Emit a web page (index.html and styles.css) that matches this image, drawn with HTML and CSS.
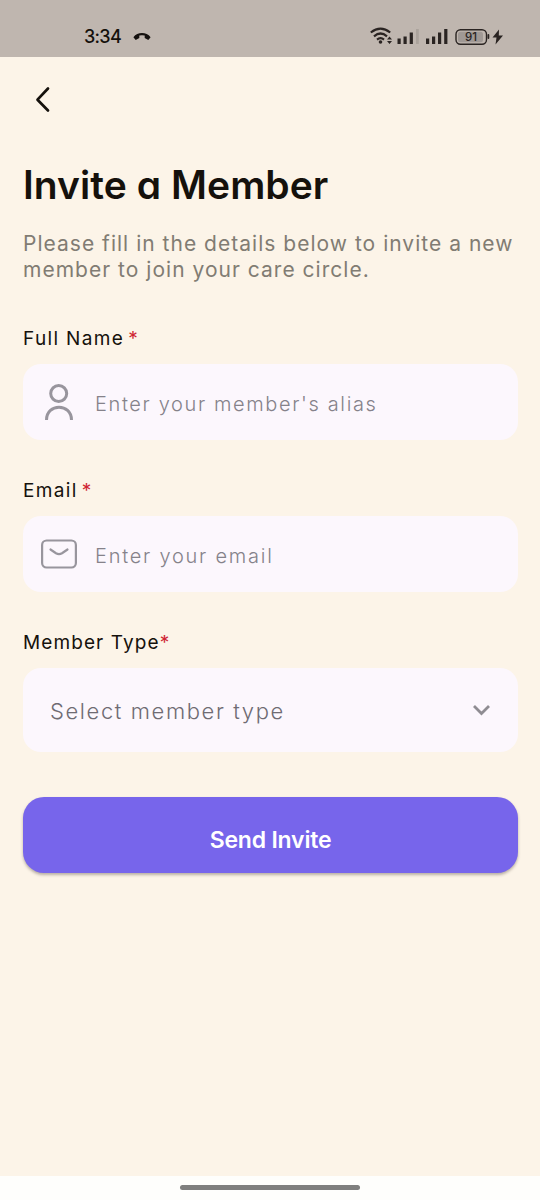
FILE: index.html
```html
<!DOCTYPE html>
<html lang="en">
<head>
<meta charset="utf-8">
<title>Invite a Member</title>
<link rel="stylesheet" href="styles.css">
</head>
<body>
<div class="screen">
  <header class="status">
    <span class="time">3:34</span>
    <svg class="call" width="18" height="10" viewBox="0 0 18 10"><path d="M.4 6.200C4.500.6 13.500.6 17.600 6.200L15.300 9 11.700 7V4.500Q9 3.800 6.300 4.500V7L2.700 9Z" fill="#15110f"/></svg>
    <svg class="signals" width="134" height="20" viewBox="0 0 134 20">
      <g fill="none" stroke="#2a2422" stroke-width="2.200">
        <path d="M.8 6.500Q10.500-1.300 20.200 6.500M4 10.300Q10.500 4.700 17 10.300M7 13.600Q10.500 10.800 14 13.600"/>
      </g>
      <g fill="#2a2422">
        <circle cx="10.500" cy="16" r="1.800"/>
        <path d="M17 13.500 19.500 10.500 22 13.500ZM17 15 22 15 19.500 18Z"/>
        <path d="M27.500 12.500h3.200V18h-3.200zM33.500 10.500h3.200V18h-3.200zM39.700 6.500h3.200V18h-3.200zM56 12.500h3.200V18H56zM62 10.500h3.200V18H62zM68 6.500h3.200V18H68zM74.200 3h3.200v15h-3.200z"/>
        <path d="M46 3h2.800v15H46z" opacity=".13"/>
        <rect x="117.500" y="8" width="1.800" height="5" rx=".9"/>
        <path d="M129 3.500 122.500 11.500h4L125.500 18.500 133 9.500h-4.200Z"/>
      </g>
      <rect x="86" y="3.800" width="30.500" height="14.400" rx="4.500" fill="none" stroke="#2a2422" stroke-width="1.400"/>
      <rect x="88" y="5.800" width="25" height="10.400" rx="2.500" fill="#a09995"/>
      <text class="level" x="101" y="15.200" text-anchor="middle">91</text>
    </svg>
  </header>
  <main class="content">
    <svg class="back" width="16" height="28" viewBox="0 0 16 28"><path d="M13 2.500 2.500 13.700 13 24.500" fill="none" stroke="#15110c" stroke-width="2.700" stroke-linecap="round" stroke-linejoin="round"/></svg>
    <h1 class="title">Invite a Member</h1>
    <p class="intro">Please fill in the details below to invite a new<br>member to join your care circle.</p>
    <form class="form">
      <div class="group">
        <div class="label"><span class="name-label">Full Name</span><span class="star spaced">*</span></div>
        <div class="field">
          <svg class="icon" width="36" height="38" viewBox="0 0 36 38"><g fill="none" stroke="#98959d" stroke-width="3"><circle cx="17.700" cy="10.500" r="8"/><path d="M5.500 37C5.500 20 30.500 20 30.500 37"/></g></svg>
          <span class="hint alias">Enter your member's alias</span>
        </div>
      </div>
      <div class="group">
        <div class="label"><span class="email-label">Email</span><span class="star spaced">*</span></div>
        <div class="field">
          <svg class="icon" width="36" height="30" viewBox="0 0 36 30"><g fill="none" stroke="#98959d" stroke-width="2.200" stroke-linecap="round"><rect x="1.100" y="1.500" width="33.800" height="27" rx="4.500"/><path d="M9.500 10.500 15 14.200Q18 16 21 14.200L26.500 10.500"/></g></svg>
          <span class="hint email">Enter your email</span>
        </div>
      </div>
      <div class="group">
        <div class="label"><span class="type-label">Member Type</span><span class="star">*</span></div>
        <div class="field select">
          <span class="choice">Select member type</span>
          <svg width="20" height="14" viewBox="0 0 20 14"><path d="M2 3 9.500 10.500 17 3" fill="none" stroke="#8f8c92" stroke-width="2.800"/></svg>
        </div>
      </div>
      <button class="send" type="button">Send Invite</button>
    </form>
  </main>
  <footer class="navbar"><div class="handle"></div></footer>
</div>
</body>
</html>
```
FILE: styles.css
```css
* { box-sizing: border-box; }
body { margin: 0; }
.screen {
  width: 540px;
  height: 1200px;
  display: flex;
  flex-direction: column;
  background: #fcf4e8;
  color: #15110c;
  font-family: Inter, sans-serif;
}
.status {
  height: 57px;
  flex: none;
  display: flex;
  align-items: center;
  padding: 15px 36px 0 84px;
  background: #bfb6af;
}
.time {
  width: 38px;
  padding-top: 1px;
  font: 500 18px/24px Inter, sans-serif;
  letter-spacing: -.7px;
  white-space: nowrap;
}
.call { margin-left: 11px; }
.signals { margin-left: auto; }
.level { font: 500 11.500px Inter, sans-serif; fill: #2a2422; }
.content { flex: 1; padding: 29px 22px 0 23px; }
.back { display: block; margin-left: 12px; }
.title {
  margin: 47px 0 0;
  font-size: 39px;
  line-height: 48px;
  font-weight: 600;
  letter-spacing: .05px;
  font-feature-settings: "cv11", "ss03";
  white-space: nowrap;
}
.intro {
  margin: 22px 0 0;
  font-size: 21px;
  line-height: 25.500px;
  letter-spacing: 1.020px;
  color: #817c73;
  white-space: nowrap;
}
.form { margin-top: 45px; }
.group { margin-bottom: 39px; }
.label {
  height: 24px;
  display: flex;
  font-size: 19px;
  line-height: 24px;
  white-space: nowrap;
}
.name-label, .email-label { letter-spacing: 1.350px; }
.type-label { letter-spacing: 1.100px; }
.star { color: #cf2531; }
.spaced { margin-left: 4px; }
.field {
  height: 76px;
  margin-top: 13px;
  padding-left: 18px;
  display: flex;
  align-items: center;
  border-radius: 18px;
  background: #fcf7fd;
}
.icon { flex: none; margin-right: 18px; }
.hint { font-size: 20px; font-weight: 300; color: #85828a; padding-top: 4px; white-space: nowrap; }
.alias { letter-spacing: 1.630px; }
.email { letter-spacing: 1.760px; }
.select { height: 84px; padding: 0 26px 0 27px; justify-content: space-between; }
.choice { padding-top: 2px; font-size: 22px; font-weight: 300; letter-spacing: 1.600px; color: #6f6b73; white-space: nowrap; }
.send {
  display: block;
  width: 100%;
  height: 76px;
  margin-top: 45px;
  padding: 9px 0 0;
  border: 0;
  border-radius: 21px;
  background: #7765eb;
  box-shadow: 0 2px 3px rgba(60, 50, 40, .35);
  color: #fff;
  font: 600 23px Inter, sans-serif;
  letter-spacing: -.2px;
  font-feature-settings: "cv11";
}
.navbar { height: 24px; flex: none; display: flex; justify-content: center; padding-top: 9px; background: #fefefc; }
.handle { width: 180px; height: 5px; border-radius: 3px; background: #7f7f7e; }
```
